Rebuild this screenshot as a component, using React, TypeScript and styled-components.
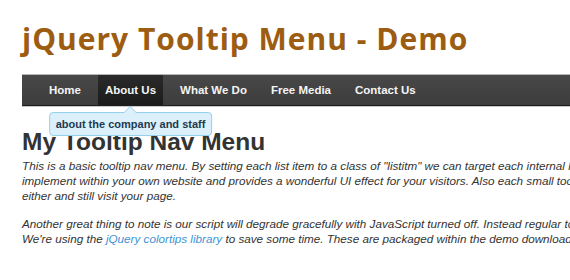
import React from "react";
import styled, { createGlobalStyle } from "styled-components";

const Global = createGlobalStyle`
  html, body { margin: 0; padding: 0; background: #fff; }
  body { width: 570px; height: 280px; overflow: hidden; }
`;

const Page = styled.div`
  width: 1000px;
  padding: 0 0 0 22px;
  font-family: "Liberation Sans", Arial, sans-serif;
  color: #333;
`;

const Title = styled.h1`
  margin: 0;
  padding-top: 21px;
  height: 52px;
  box-sizing: border-box;
  font-family: "Open Sans", "DejaVu Sans", sans-serif;
  font-weight: 700;
  font-size: 30px;
  line-height: 36px;
  letter-spacing: 1px;
  color: #9c5d12;
`;

const NavBar = styled.nav`
  height: 30px;
  margin-top: 22px;
  border-top: 1px solid #b5b5b5;
  border-bottom: 1px solid #1e1e1e;
  box-shadow: 0 1px 0 #c8c8c8;
  background: linear-gradient(#484848, #3c3c3c);
  display: flex;
  align-items: stretch;
  gap: 10px;
  padding-left: 20px;
`;

const NavItem = styled.a<{ $active?: boolean }>`
  position: relative;
  display: flex;
  align-items: center;
  padding: 0 7px;
  font-family: "Liberation Sans", Arial, sans-serif;
  font-weight: 700;
  font-size: 11.5px;
  color: #f4f4f4;
  text-decoration: none;
  background: ${(p) => (p.$active ? "linear-gradient(#2a2a2a, #1b1b1b)" : "transparent")};
`;

const Tooltip = styled.span`
  position: absolute;
  top: 37px;
  left: 50%;
  transform: translateX(-50%);
  white-space: nowrap;
  padding: 5px 6px 5px 6px;
  border: 1px solid #94cfec;
  border-radius: 4px;
  background: #dcf0fb;
  color: #1d3a52;
  font-size: 11px;
  line-height: 12px;
  font-weight: 700;
  z-index: 2;
  &::before, &::after {
    content: "";
    position: absolute;
    left: 50%;
    transform: translateX(-50%);
    border-style: solid;
    border-color: transparent;
  }
  &::before {
    top: -7px;
    border-width: 0 7px 7px 7px;
    border-bottom-color: #94cfec;
  }
  &::after {
    top: -6px;
    border-width: 0 6px 6px 6px;
    border-bottom-color: #dcf0fb;
  }
`;

const Heading = styled.h2`
  margin: 0;
  padding-top: 22px;
  font-size: 24.5px;
  line-height: 28px;
  font-weight: 700;
  color: #333;
`;

const Para = styled.p`
  margin: 2px 0 13px;
  font-size: 11.7px;
  line-height: 15px;
  font-style: italic;
  white-space: nowrap;
  color: #333;
`;

const Link = styled.a`
  color: #4193d4;
  text-decoration: none;
`;

const items = ["Home", "About Us", "What We Do", "Free Media", "Contact Us"];

export default function App() {
  return (
    <>
      <Global />
      <Page>
        <Title>jQuery Tooltip Menu - Demo</Title>
        <NavBar>
          {items.map((it) => (
            <NavItem key={it} href="#" $active={it === "About Us"}>
              {it}
              {it === "About Us" && <Tooltip>about the company and staff</Tooltip>}
            </NavItem>
          ))}
        </NavBar>
        <Heading>My Tooltip Nav Menu</Heading>
        <Para>
          This is a basic tooltip nav menu. By setting each list item to a class of "listitm" we can target each internal link with a title attribute. This is super easy to
          <br />
          implement within your own website and provides a wonderful UI effect for your visitors. Also each small tooltip is accessible for users without JavaScript
          <br />
          either and still visit your page.
        </Para>
        <Para>
          Another great thing to note is our script will degrade gracefully with JavaScript turned off. Instead regular tooltips will display from the title attribute.
          <br />
          We're using the <Link href="#">jQuery colortips library</Link> to save some time. These are packaged within the demo download for you to use.
        </Para>
      </Page>
    </>
  );
}
